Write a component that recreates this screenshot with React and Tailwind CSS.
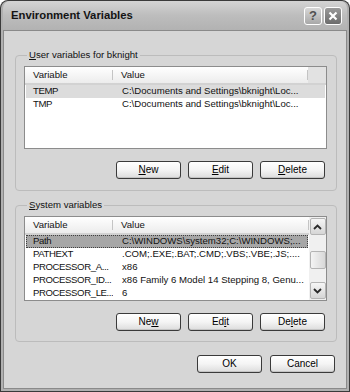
import React from "react";

const userVars = [
    { name: "TEMP", value: "C:\\Documents and Settings\\bknight\\Loc...", selected: true },
    { name: "TMP", value: "C:\\Documents and Settings\\bknight\\Loc..." },
];

const systemVars = [
    { name: "Path", value: "C:\\WINDOWS\\system32;C:\\WINDOWS;...", selected: true },
    { name: "PATHEXT", value: ".COM;.EXE;.BAT;.CMD;.VBS;.VBE;.JS;...." },
    { name: "PROCESSOR_A...", value: "x86" },
    { name: "PROCESSOR_ID...", value: "x86 Family 6 Model 14 Stepping 8, Genu..." },
    { name: "PROCESSOR_LE...", value: "6" },
];

const XpButton = ({ children, className = "" }) => (
    <button className={`h-[18px] w-[65px] rounded-[3px] border border-[#3a3a3a] bg-gradient-to-b from-white via-[#f4f4f4] to-[#dcdcdc] shadow-[inset_0_-1px_0_#c4c4c4] flex items-center justify-center text-[10px] leading-none text-black ${className}`}>
        {children}
    </button>
);

const Header = ({ withTail }) => (
    <div className="flex h-[18px] shrink-0 bg-gradient-to-b from-white to-[#ececec] border-b-2 border-[#d2d2d2]">
        <div className="w-[88px] flex items-center pl-[8px] border-r border-[#c4c4c4] my-[3px]">Variable</div>
        <div className="flex-1 flex items-center pl-[8px] border-r border-[#c4c4c4] my-[3px]">Value</div>
        {withTail && <div className="w-[18px] bg-[#e2e2e2]"></div>}
    </div>
);

const Row = ({ item, focused }) => (
    <div
        className={`flex h-[13px] items-center mx-px ${
            item.selected
                ? focused
                    ? "bg-[#a6a6a6] outline outline-1 outline-dotted outline-[#404040] -outline-offset-1"
                    : "bg-[#dcdcdc]"
                : ""
        }`}
    >
        <div className="w-[87px] shrink-0 pl-[7px] whitespace-nowrap overflow-hidden tracking-[-0.4px]">{item.name}</div>
        <div className="flex-1 min-w-0 pl-[9px] whitespace-nowrap overflow-hidden">{item.value}</div>
    </div>
);

const Chevron = ({ down }) => (
    <svg width="9" height="6" viewBox="0 0 9 6">
        <path d={down ? "M1 1 L4.5 4.5 L8 1" : "M1 5 L4.5 1.5 L8 5"} fill="none" stroke="#2a2a2a" strokeWidth="1.8" />
    </svg>
);

const ScrollBtn = ({ down }) => (
    <div className="h-[17px] w-[16px] rounded-[2px] border border-[#b4b4b4] bg-gradient-to-b from-[#f6f6f6] to-[#d6d6d6] flex items-center justify-center">
        <Chevron down={down} />
    </div>
);

const Mn = ({ children }) => <span className="underline underline-offset-[1px]">{children}</span>;

const Group = ({ label, children, className = "" }) => (
    <fieldset className={`min-w-0 border border-[#bcbcbc] rounded-[4px] px-[8px] pr-[9px] ${className}`}>
        <legend className="ml-[3px] px-[2px] h-[12px] leading-[12px]">{label}</legend>
        {children}
    </fieldset>
);

export default function App() {
    return (
        <div className="w-[350px] h-[392px] bg-[#3a3a3a] p-px rounded-t-[8px] font-['Liberation_Sans',Arial,sans-serif] text-[9.6px] text-[#111]">
            <div className="h-full flex flex-col rounded-t-[7px] bg-[#b0b0b0] px-[2px] pb-[2px]">
                <div className="h-[29px] shrink-0 flex items-center pl-[8px] pr-[5px] rounded-t-[7px] bg-gradient-to-b from-[#d4d4d4] via-[#bdbdbd] to-[#b2b2b2]">
                    <span className="flex-1 font-bold text-[11.3px] text-[#141414]">Environment Variables</span>
                    <div className="flex gap-[2px]">
                        <div className="w-[18px] h-[18px] rounded-[3px] border border-white bg-gradient-to-b from-[#d8d8d8] to-[#a8a8a8] flex items-center justify-center font-bold text-[13px] text-[#505050]">?</div>
                        <div className="w-[18px] h-[18px] rounded-[3px] border border-white bg-gradient-to-b from-[#9a9a9a] to-[#6c6c6c] flex items-center justify-center">
                            <svg width="10" height="10" viewBox="0 0 10 10">
                                <path d="M1.5 1.5 L8.5 8.5 M8.5 1.5 L1.5 8.5" stroke="white" strokeWidth="2.2" />
                            </svg>
                        </div>
                    </div>
                </div>

                <div className="flex-1 min-w-0 flex flex-col bg-[#d6d6d6] border border-[#8a8a8a] pl-[11px] pr-[9px] pt-[18px]">
                    <Group label={<><Mn>U</Mn>ser variables for bknight</>} className="pt-[5px] pb-[11px]">
                        <div className="h-[83px] bg-white border border-[#8c8c8c] flex flex-col">
                            <Header withTail />
                            {userVars.map(v => <Row key={v.name} item={v} />)}
                        </div>
                        <div className="flex justify-end gap-[7px] pr-[2px] mt-[12px]">
                            <XpButton><Mn>N</Mn>ew</XpButton>
                            <XpButton><Mn>E</Mn>dit</XpButton>
                            <XpButton><Mn>D</Mn>elete</XpButton>
                        </div>
                    </Group>

                    <Group label={<><Mn>S</Mn>ystem variables</>} className="mt-[8px] pt-[5px] pb-[10px]">
                        <div className="h-[85px] bg-white border border-[#8c8c8c] flex">
                            <div className="flex-1 min-w-0 flex flex-col overflow-hidden">
                                <Header />
                                {systemVars.map(v => <Row key={v.name} item={v} focused />)}
                            </div>
                            <div className="w-[17px] shrink-0 flex flex-col items-center bg-[#f0f0f0] py-px">
                                <ScrollBtn />
                                <div className="flex-1 w-full flex flex-col items-center pt-[16px]">
                                    <div className="h-[18px] w-[16px] rounded-[2px] border border-[#b4b4b4] bg-gradient-to-r from-[#f4f4f4] to-[#d8d8d8]"></div>
                                </div>
                                <ScrollBtn down />
                            </div>
                        </div>
                        <div className="flex justify-end gap-[7px] pr-[2px] mt-[12px]">
                            <XpButton>Ne<Mn>w</Mn></XpButton>
                            <XpButton>Ed<Mn>i</Mn>t</XpButton>
                            <XpButton>De<Mn>l</Mn>ete</XpButton>
                        </div>
                    </Group>

                    <div className="flex justify-end gap-[8px] pr-[2px] mt-[13px]">
                        <XpButton>OK</XpButton>
                        <XpButton>Cancel</XpButton>
                    </div>
                </div>
            </div>
        </div>
    );
}
